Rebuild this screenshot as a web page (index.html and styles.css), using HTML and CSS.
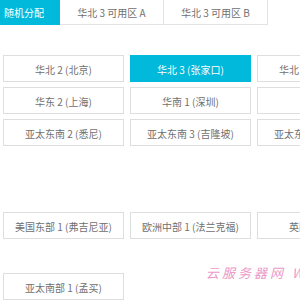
FILE: index.html
```
<!DOCTYPE html>
<html>
<head>
  <title>可用区选择</title>
  <link rel="stylesheet" href="styles.css">
</head>
<body>
  <div class="tabs">
    <div class="tab active">随机分配</div>
    <div class="tab">华北 3 可用区 A</div>
    <div class="tab">华北 3 可用区 B</div>
  </div>

  <div class="regions first">
    <div class="region">华北 2 (北京)</div>
    <div class="region selected">华北 3 (张家口)</div>
    <div class="region">华北 5 (呼和浩特)</div>
    <div class="region">华东 2 (上海)</div>
    <div class="region">华南 1 (深圳)</div>
    <div class="region"></div>
    <div class="region">亚太东南 2 (悉尼)</div>
    <div class="region">亚太东南 3 (吉隆坡)</div>
    <div class="region">亚太东南 5 (雅加达)</div>
  </div>

  <div class="regions second">
    <div class="region">美国东部 1 (弗吉尼亚)</div>
    <div class="region">欧洲中部 1 (法兰克福)</div>
    <div class="region">英国 1 (伦敦)</div>
  </div>

  <div class="regions third">
    <div class="region">亚太南部 1 (孟买)</div>
  </div>

  <div class="watermark">云服务器网 WWW.YUNTUE.COM</div>
</body>
</html>
```
FILE: styles.css
```
body {
  margin: 0;
  background: #fff;
  font-family: "Noto Sans CJK SC", "Liberation Sans", sans-serif;
  font-size: 10px;
  color: #707070;
  overflow: hidden;
  position: relative;
  height: 300px;
}

.tabs {
  display: flex;
  height: 25px;
}

.tab {
  width: 104px;
  line-height: 26px;
  text-align: center;
  border-right: 1px solid #e3e3e3;
  border-bottom: 1px solid #e3e3e3;
  box-sizing: border-box;
}

.tab.active {
  width: 60px;
  background: #00b9db;
  color: #fff;
  text-align: left;
  padding-left: 4px;
  border: none;
}

.regions {
  display: grid;
  grid-template-columns: 121px 121px 121px;
  column-gap: 6px;
  row-gap: 5px;
  margin-left: 3px;
}

.regions.first {
  margin-top: 30px;
}

.regions.second {
  margin-top: 66px;
}

.regions.third {
  margin-top: 34px;
}

.region {
  height: 27px;
  line-height: 27px;
  border: 1px solid #dedede;
  box-sizing: border-box;
  text-align: center;
  white-space: nowrap;
  overflow: hidden;
}

.region.selected {
  background: #00b9db;
  border-color: #00b9db;
  color: #fff;
}

.watermark {
  position: absolute;
  left: 206px;
  top: 263px;
  font-size: 13px;
  letter-spacing: 3px;
  color: #ec9ac8;
  font-style: italic;
  white-space: nowrap;
}
```
